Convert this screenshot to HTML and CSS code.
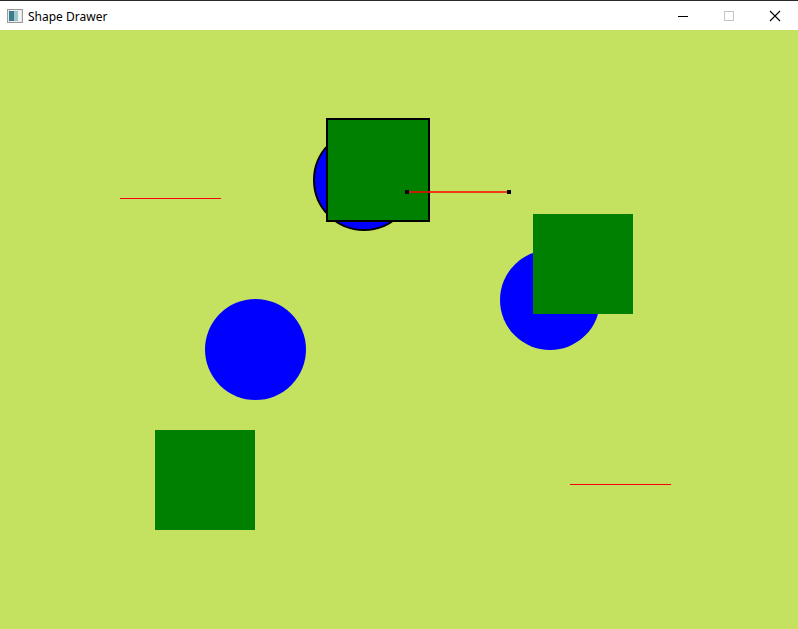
FILE: index.html
```html
<!DOCTYPE html>
<html>
<head>
<meta charset="utf-8">
<title>Shape Drawer</title>
<link rel="stylesheet" href="styles.css">
</head>
<body>
<div class="window">
  <div class="titlebar">
    <svg class="app-icon" width="16" height="16" viewBox="0 0 16 16">
      <rect x="0.5" y="1.5" width="15" height="13" fill="#e8e8e8" stroke="#9a9a9a"/>
      <rect x="2" y="3" width="5" height="10" fill="#3b7d8f"/>
      <rect x="7" y="3" width="4" height="10" fill="#9cc7c9"/>
      <rect x="11" y="3" width="3" height="10" fill="#f2f2f2"/>
    </svg>
    <span class="title">Shape Drawer</span>
    <div class="controls">
      <div class="ctl"><svg width="12" height="12" viewBox="0 0 12 12"><line x1="1" y1="6.5" x2="11" y2="6.5" stroke="#000" stroke-width="1"/></svg></div>
      <div class="ctl"><svg width="12" height="12" viewBox="0 0 12 12"><rect x="1.5" y="1.5" width="9" height="9" fill="none" stroke="#c4c4c4" stroke-width="1"/></svg></div>
      <div class="ctl"><svg width="12" height="12" viewBox="0 0 12 12"><path d="M1 1L11 11M11 1L1 11" stroke="#000" stroke-width="1.1"/></svg></div>
    </div>
  </div>
  <svg class="canvas" width="798" height="599" viewBox="0 0 798 599">
    <rect width="798" height="599" fill="#c5e160"/>
    <line x1="120" y1="168.5" x2="221" y2="168.5" stroke="#ff0000" stroke-width="1"/>
    <line x1="570" y1="454.5" x2="671" y2="454.5" stroke="#ff0000" stroke-width="1"/>
    <circle cx="255.5" cy="319.5" r="50.5" fill="#0000ff"/>
    <rect x="155" y="400" width="100" height="100" fill="#008000"/>
    <circle cx="550" cy="270" r="50" fill="#0000ff"/>
    <rect x="533" y="184" width="100" height="100" fill="#008000"/>
    <circle cx="364" cy="150" r="50" fill="#0000ff" stroke="#000" stroke-width="2"/>
    <rect x="327" y="89" width="102" height="102" fill="#008000" stroke="#000" stroke-width="2"/>
    <line x1="406" y1="162" x2="508" y2="162" stroke="#ff0000" stroke-width="1.4"/>
    <rect x="405" y="160" width="4" height="4" fill="#000"/>
    <rect x="507" y="160" width="4" height="4" fill="#000"/>
  </svg>
</div>
</body>
</html>
```
FILE: styles.css
```css
html, body {
  margin: 0;
  padding: 0;
  background: #c5e160;
}
.window {
  width: 798px;
  height: 629px;
  display: flex;
  flex-direction: column;
  overflow: hidden;
}
.titlebar {
  height: 29px;
  background: #ffffff;
  border-top: 1px solid #2b2b2b;
  display: flex;
  align-items: center;
  flex: none;
}
.app-icon {
  margin-left: 7px;
  margin-top: 1px;
}
.title {
  margin-left: 5px;
  font-family: "Noto Sans", "Open Sans", sans-serif;
  font-size: 12px;
  color: #000;
  margin-top: 1px;
}
.controls {
  margin-left: auto;
  display: flex;
  height: 100%;
}
.ctl {
  width: 46px;
  height: 100%;
  display: flex;
  align-items: center;
  justify-content: center;
}
.canvas {
  display: block;
  flex: none;
}
```
